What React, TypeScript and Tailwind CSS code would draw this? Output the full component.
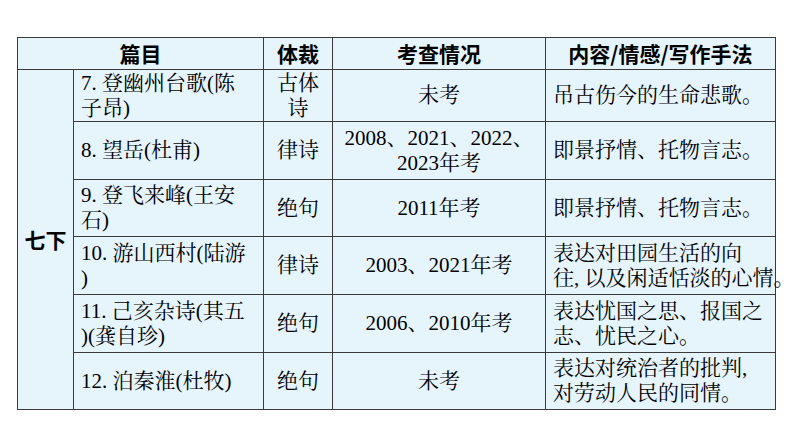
const body = {
  fontFamily: '"Liberation Serif", "Noto Serif CJK SC", "Noto Sans CJK SC", serif',
};
const head = {
  fontFamily: '"Noto Sans CJK SC", "Liberation Sans", sans-serif',
};

type Row = {
  title: React.ReactNode;
  genre: React.ReactNode;
  exam: React.ReactNode;
  note: React.ReactNode;
  h: string;
};

const rows: Row[] = [
  {
    title: (<>7. 登幽州台歌(陈<br />子昂)</>),
    genre: (<>古体<br />诗</>),
    exam: "未考",
    note: "吊古伤今的生命悲歌。",
    h: "h-[52px]",
  },
  {
    title: "8. 望岳(杜甫)",
    genre: "律诗",
    exam: (<>2008、2021、2022、<br />2023年考</>),
    note: "即景抒情、托物言志。",
    h: "h-[58px]",
  },
  {
    title: (<>9. 登飞来峰(王安<br />石)</>),
    genre: "绝句",
    exam: "2011年考",
    note: "即景抒情、托物言志。",
    h: "h-[57px]",
  },
  {
    title: (<>10. 游山西村(陆游<br />)</>),
    genre: "律诗",
    exam: "2003、2021年考",
    note: (<>表达对田园生活的向<br />往, 以及闲适恬淡的心情。</>),
    h: "h-[58px]",
  },
  {
    title: (<>11. 己亥杂诗(其五<br />)(龚自珍)</>),
    genre: "绝句",
    exam: "2006、2010年考",
    note: (<>表达忧国之思、报国之<br />志、忧民之心。</>),
    h: "h-[58px]",
  },
  {
    title: "12. 泊秦淮(杜牧)",
    genre: "绝句",
    exam: "未考",
    note: (<>表达对统治者的批判,<br />对劳动人民的同情。</>),
    h: "h-[57px]",
  },
];

const cell = "border-[1.5px] border-[#3a3a3a] p-0 align-middle";

export default function App() {
  return (
    <div className="w-[794px] h-[447px] bg-white pt-[37px] pl-[17px]">
      <table className="border-collapse bg-[#e6f4fc] text-black text-[21px] leading-[25px] table-fixed w-[758px]">
        <colgroup>
          <col className="w-[56px]" />
          <col className="w-[190px]" />
          <col className="w-[69px]" />
          <col className="w-[213px]" />
          <col className="w-[230px]" />
        </colgroup>
        <thead>
          <tr className="h-[32px]" style={head}>
            <th colSpan={2} className={`${cell} font-bold text-center`}>篇目</th>
            <th className={`${cell} font-bold text-center`}>体裁</th>
            <th className={`${cell} font-bold text-center`}>考查情况</th>
            <th className={`${cell} font-bold text-center`}>内容/情感/写作手法</th>
          </tr>
        </thead>
        <tbody style={body}>
          {rows.map((r, i) => (
            <tr key={i} className={r.h}>
              {i === 0 && (
                <td rowSpan={rows.length} className={`${cell} text-center font-bold`} style={head}>
                  七下
                </td>
              )}
              <td className={`${cell} pl-[7px] whitespace-nowrap`}>{r.title}</td>
              <td className={`${cell} text-center`}>{r.genre}</td>
              <td className={`${cell} text-center whitespace-nowrap`}>{r.exam}</td>
              <td className={`${cell} pl-[7px] whitespace-nowrap overflow-visible`}>{r.note}</td>
            </tr>
          ))}
        </tbody>
      </table>
    </div>
  );
}
